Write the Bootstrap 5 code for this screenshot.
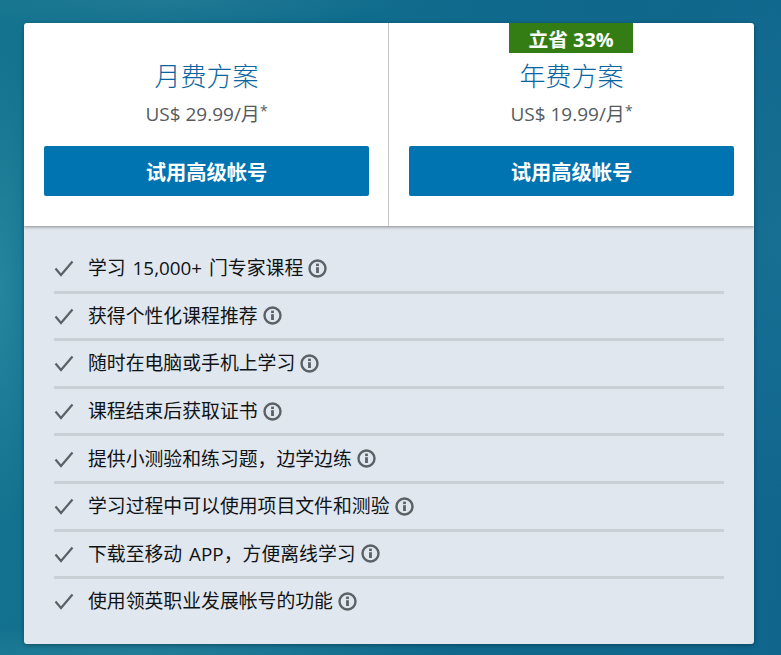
<!DOCTYPE html>
<html lang="zh-CN">
<head>
<meta charset="utf-8">
<title>方案</title>
<link rel="stylesheet" href="https://cdn.jsdelivr.net/npm/bootstrap@5.3.0/dist/css/bootstrap.min.css">
<style>
html,body{height:100%}
body{font-family:"Open Sans","Noto Sans CJK SC",sans-serif;overflow:hidden;
background:
radial-gradient(ellipse 45px 240px at 0px 290px,rgba(45,140,165,.7),transparent),
radial-gradient(ellipse 120px 300px at 781px 240px,rgba(35,125,160,.4),transparent),
radial-gradient(ellipse 300px 30px at 150px 655px,rgba(45,135,160,.6),transparent),
radial-gradient(ellipse 240px 30px at 170px 0px,rgba(45,130,155,.5),transparent),
linear-gradient(100deg,#14748f 0%,#0f6a8c 50%,#10658c 100%);}
.plan-wrap{width:730px;margin:23px 0 0 24px;border-radius:3px;box-shadow:0 1px 4px rgba(0,0,0,.35);overflow:hidden}
.plan-top{height:203px;background:#fff;box-shadow:0 1px 3px rgba(0,0,0,.4);position:relative}
.plan-col{flex:0 0 50%;padding:0 20px;height:203px;text-align:center;position:relative}
.plan-col:first-child{border-right:1px solid #c3c7cb;padding-right:19px}
.plan-name{font-size:26px;line-height:36px;font-weight:300;color:#0a659f;padding-top:35px;margin:0;box-sizing:content-box}
.plan-price{font-size:19px;line-height:26px;color:#565b60;margin:7px 0 19px}
.plan-price sup{font-size:14px;top:-.35em}
.plan-btn{display:block;width:100%;height:50px;padding:3px 0 0;border:0;border-radius:2px;background:#0073b1;color:#fff;font-size:20.3px;font-weight:700}
.plan-save{position:absolute;top:0;left:calc(50% - 62.5px);width:124px;height:30px;line-height:30px;padding-top:2px;background:#347d14;color:#fff;font-size:19.8px;font-weight:700}
.plan-list{background:#e1e7ee;padding:20px 30px 16px;height:418px}
.plan-list ul{margin:0;padding:0;list-style:none}
.plan-list li{height:47.6px;border-bottom:3px solid #c9d0d6;display:flex;align-items:center;gap:4px;font-size:18.85px;line-height:26px;color:#0f1316;word-spacing:2px}
.plan-list li:last-child{border-bottom:0;padding-bottom:3px}
.plan-check{width:20px;height:20px;margin-right:10px;flex:none}
.plan-info{width:19px;height:19px;flex:none;margin-left:1px}
</style>
</head>
<body>
<svg width="0" height="0" class="d-block" aria-hidden="true"><defs>
<symbol id="tick" viewBox="0 0 20 20"><path d="M1.5 10.5 7 17 18.5 3.5" fill="none" stroke="#5c6166" stroke-width="2.2"/></symbol>
<symbol id="inf" viewBox="0 0 19 19"><circle cx="9.5" cy="9.5" r="8" fill="none" stroke="#5c6166" stroke-width="2.4"/><rect x="8.1" y="8.2" width="2.8" height="5.8" fill="#5c6166"/><rect x="8.1" y="4.6" width="2.8" height="2.5" fill="#5c6166"/></symbol>
</defs></svg>
<div class="plan-wrap">
  <div class="plan-top d-flex">
    <div class="plan-col">
      <h2 class="plan-name">月费方案</h2>
      <p class="plan-price">US$ 29.99/月<sup>*</sup></p>
      <button class="btn plan-btn" type="button">试用高级帐号</button>
    </div>
    <div class="plan-col">
      <div class="plan-save">立省 33%</div>
      <h2 class="plan-name">年费方案</h2>
      <p class="plan-price">US$ 19.99/月<sup>*</sup></p>
      <button class="btn plan-btn" type="button">试用高级帐号</button>
    </div>
  </div>
  <div class="plan-list">
    <ul>
      <li><svg class="plan-check"><use href="#tick"/></svg><span>学习 15,000+ 门专家课程</span><svg class="plan-info"><use href="#inf"/></svg></li>
      <li><svg class="plan-check"><use href="#tick"/></svg><span>获得个性化课程推荐</span><svg class="plan-info"><use href="#inf"/></svg></li>
      <li><svg class="plan-check"><use href="#tick"/></svg><span>随时在电脑或手机上学习</span><svg class="plan-info"><use href="#inf"/></svg></li>
      <li><svg class="plan-check"><use href="#tick"/></svg><span>课程结束后获取证书</span><svg class="plan-info"><use href="#inf"/></svg></li>
      <li><svg class="plan-check"><use href="#tick"/></svg><span>提供小测验和练习题，边学边练</span><svg class="plan-info"><use href="#inf"/></svg></li>
      <li><svg class="plan-check"><use href="#tick"/></svg><span>学习过程中可以使用项目文件和测验</span><svg class="plan-info"><use href="#inf"/></svg></li>
      <li><svg class="plan-check"><use href="#tick"/></svg><span>下载至移动 APP，方便离线学习</span><svg class="plan-info"><use href="#inf"/></svg></li>
      <li><svg class="plan-check"><use href="#tick"/></svg><span>使用领英职业发展帐号的功能</span><svg class="plan-info"><use href="#inf"/></svg></li>
    </ul>
  </div>
</div>
<script src="https://cdn.jsdelivr.net/npm/bootstrap@5.3.0/dist/js/bootstrap.bundle.min.js"></script>
</body>
</html>
